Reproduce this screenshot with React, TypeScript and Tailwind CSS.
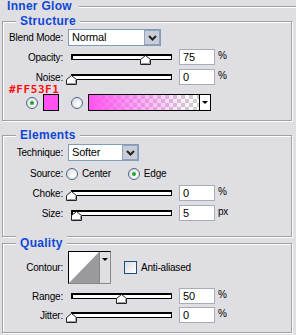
import React from "react";

const BG = "bg-[#dfdfe3]";

// small up-pointing slider thumb
const Thumb = ({ left }: { left: number }) => (
    <svg
        className="absolute top-[0px]"
        style={{ left: left - 5 }}
        width="11"
        height="10"
        viewBox="0 0 11 10"
    >
        <path d="M0.5 9.5 V4.5 L5.5 0.5 L10.5 4.5 V9.5 Z" fill="#fff" stroke="#222" />
        <path d="M1.5 8.5 H9.5 V5" fill="none" stroke="#999" />
    </svg>
);

const Slider = ({ pos }: { pos: number }) => (
    <div className="relative w-[101px] h-[16px] ml-[8px] shrink-0">
        <div className="absolute left-0 top-[5px] w-[101px] h-[6px] border border-black bg-white shadow-[inset_1px_1px_0_#000]" />
        <div className="absolute left-0 top-[6px] w-full">
            <Thumb left={pos} />
        </div>
    </div>
);

const NumInput = ({ value }: { value: string }) => (
    <div className="ml-[7px] w-[36px] h-[16px] shrink-0 border border-[#a6adb6] bg-white pl-[3px] leading-[14px] text-[11px]">
        {value}
    </div>
);

const Label = ({ children }: { children: React.ReactNode }) => (
    <div className="w-[60px] text-right shrink-0 whitespace-nowrap">{children}</div>
);

const SliderRow = ({ label, pos, value, unit, className }: { label: string; pos: number; value: string; unit: string; className: string }) => (
    <div className={`flex items-center h-[16px] ${className}`}>
        <Label>{label}</Label>
        <Slider pos={pos} />
        <NumInput value={value} />
        <span className="ml-[3px] -mt-[3px]">{unit}</span>
    </div>
);

const Radio = ({ on, className = "" }: { on?: boolean; className?: string }) => (
    <div className={`w-[12px] h-[12px] rounded-full border border-[#4a6584] bg-[radial-gradient(circle_at_65%_65%,#ffffff,#d8d8dc)] flex items-center justify-center shrink-0 ${className}`}>
        {on && <div className="w-[4px] h-[4px] rounded-full bg-[#21a52a]" />}
    </div>
);

const Chevron = () => (
    <svg width="9" height="6" viewBox="0 0 9 6">
        <path d="M1 1 L4.5 4.5 L8 1" fill="none" stroke="#222" strokeWidth="2" />
    </svg>
);

const Select = ({ value, w }: { value: string; w: string }) => (
    <div className={`ml-[5px] ${w} h-[17px] flex border border-[#7f9db9] bg-white shrink-0`}>
        <div className="flex-1 pl-[3px] leading-[15px] text-[11px]">{value}</div>
        <div className="w-[16px] h-[15px] bg-[#c8cdd8] border border-[#93a3bc] flex items-center justify-center">
            <Chevron />
        </div>
    </div>
);

const Group = ({ title, className, children }: { title: string; className: string; children: React.ReactNode }) => (
    <div className={`relative ml-[2px] w-[290px] border border-[#a0a0a0] shadow-[inset_1px_1px_0_#fff,1px_1px_0_#fff] ${className}`}>
        <div className={`absolute left-[13px] -top-[8px] px-[4px] ${BG} text-[#1047d6] font-bold text-[12px] leading-[14px] tracking-[0.3px]`}>
            {title}
        </div>
        {children}
    </div>
);

export default function App() {
    return (
        <div className={`w-[296px] h-[335px] ${BG} text-black text-[10px] leading-[13px] tracking-[-0.2px] overflow-hidden`} style={{ fontFamily: '"Liberation Sans", Arial, sans-serif' }}>
            {/* Header */}
            <div className="flex items-center h-[13px]">
                <div className="ml-[7px] text-[#1047d6] font-bold text-[12px] tracking-[0.3px]">Inner Glow</div>
                <div className="ml-[7px] flex-1 h-[2px] border-t border-[#a0a0a0] border-b border-b-white" />
            </div>

            {/* Structure */}
            <Group title="Structure" className="mt-[8px] h-[100px]">
                <div className="flex items-center mt-[7px]">
                    <Label>Blend Mode:</Label>
                    <Select value="Normal" w="w-[93px]" />
                </div>
                <SliderRow label="Opacity:" pos={74} value="75" unit="%" className="mt-[3px]" />
                <SliderRow label="Noise:" pos={0} value="0" unit="%" className="mt-[4px]" />
                <div className="ml-[6px] text-[#ff1010] font-bold text-[11px] leading-[10px] h-[10px] tracking-[0.6px]" style={{ fontFamily: '"DejaVu Sans Mono", monospace' }}>
                    #FF53F1
                </div>
                <div className="flex items-center h-[17px] -mt-[1px]">
                    <Radio on className="ml-[23px]" />
                    <div className="ml-[5px] w-[16px] h-[17px] shrink-0 border border-black bg-[#ff53f1]" />
                    <Radio className="ml-[12px]" />
                    <div className="ml-[5px] w-[123px] h-[17px] shrink-0 border border-black flex">
                        <div className="flex-1 bg-[linear-gradient(to_right,#ff53f1,rgba(255,83,241,0.5)_45%,rgba(255,83,241,0)_95%),repeating-conic-gradient(#cfcfcf_0_25%,#ffffff_0_50%)] [background-size:100%_100%,8px_8px]" />
                        <div className="w-[11px] border-l border-black bg-white flex items-center justify-center">
                            <div className="w-0 h-0 border-l-[3px] border-r-[3px] border-t-[3px] border-l-transparent border-r-transparent border-t-black" />
                        </div>
                    </div>
                </div>
            </Group>

            {/* Elements */}
            <Group title="Elements" className="mt-[14px] h-[102px]">
                <div className="flex items-center mt-[8px]">
                    <Label>Technique:</Label>
                    <Select value="Softer" w="w-[71px]" />
                </div>
                <div className="flex items-center mt-[6px] h-[13px]">
                    <Label>Source:</Label>
                    <Radio className="ml-[3px]" />
                    <span className="ml-[4px]">Center</span>
                    <Radio on className="ml-[17px]" />
                    <span className="ml-[4px]">Edge</span>
                </div>
                <SliderRow label="Choke:" pos={0} value="0" unit="%" className="mt-[5px]" />
                <SliderRow label="Size:" pos={5} value="5" unit="px" className="mt-[4px]" />
            </Group>

            {/* Quality */}
            <Group title="Quality" className="mt-[6px] h-[90px]">
                <div className="flex items-center mt-[7px]">
                    <Label>Contour:</Label>
                    <div className="ml-[5px] w-[43px] h-[33px] shrink-0 flex border border-black border-r-[#888] border-b-[#888]">
                        <div className="w-[30px] h-full bg-white">
                            <svg width="30" height="31" viewBox="0 0 30 31">
                                <path d="M0 31 L30 0 L30 31 Z" fill="#9a9a9e" />
                            </svg>
                        </div>
                        <div className={`flex-1 ${BG} flex justify-center pt-[6px] border-l border-[#888]`}>
                            <div className="w-0 h-0 border-l-[3px] border-r-[3px] border-t-[3px] border-l-transparent border-r-transparent border-t-black" />
                        </div>
                    </div>
                    <div className="ml-[13px] w-[13px] h-[13px] shrink-0 border border-[#1c4f80] bg-[linear-gradient(135deg,#dcdcdc,#ffffff)]" />
                    <span className="ml-[4px]">Anti-aliased</span>
                </div>
                <SliderRow label="Range:" pos={50} value="50" unit="%" className="mt-[4px]" />
                <SliderRow label="Jitter:" pos={0} value="0" unit="%" className="mt-[3px]" />
            </Group>
        </div>
    );
}
